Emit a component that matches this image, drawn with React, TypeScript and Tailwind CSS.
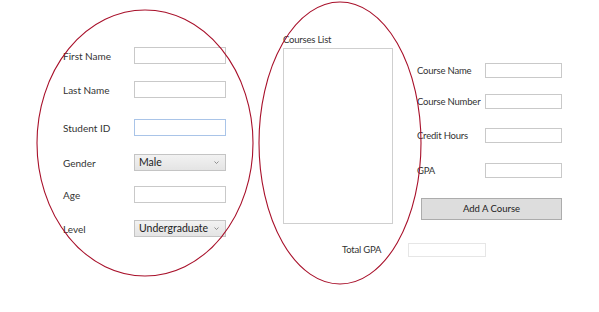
import React from 'react';

const font = { fontFamily: 'Lato, "Open Sans", sans-serif' };

const TextBox = ({ w = 'w-[92px]', h = 'h-[17px]', focused = false, faint = false }: { w?: string; h?: string; focused?: boolean; faint?: boolean }) => (
  <div
    className={`${w} ${h} bg-white border ${
      focused ? 'border-[#a9c4e8]' : faint ? 'border-[#e6e6e6]' : 'border-[#c9c9c9]'
    }`}
  />
);

const ComboBox = ({ value }: { value: string }) => (
  <div className="w-[92px] h-[17px] flex items-center justify-between pl-[4px] pr-[6px] border border-[#c4c4c4] bg-gradient-to-b from-[#f2f2f2] to-[#e4e4e4] text-[10.5px] text-[#222]">
    <span className="leading-none whitespace-nowrap">{value}</span>
    <svg width="5" height="3" viewBox="0 0 5 3" className="shrink-0">
      <path d="M0.5 0.5 L2.5 2.5 L4.5 0.5" fill="none" stroke="#777" strokeWidth="0.8" />
    </svg>
  </div>
);

const Row = ({ label, children, mt, labelW = 'w-[71px]', small = false }: { label: string; children: React.ReactNode; mt: string; labelW?: string; small?: boolean }) => (
  <div className={`flex items-center ${mt}`}>
    <span
      className={`${labelW} shrink-0 whitespace-nowrap text-[#333] leading-none ${
        small ? 'text-[9.5px] tracking-[-0.2px]' : 'text-[10px]'
      }`}
    >
      {label}
    </span>
    {children}
  </div>
);

export default function App() {
  return (
    <div className="relative w-[599px] h-[312px] bg-white overflow-hidden" style={font}>
      <div className="flex">
        {/* student info */}
        <div className="ml-[63px] mt-[47px] w-[163px] flex flex-col">
          <Row label="First Name" mt="mt-0">
            <TextBox />
          </Row>
          <Row label="Last Name" mt="mt-[17px]">
            <TextBox />
          </Row>
          <Row label="Student ID" mt="mt-[21px]">
            <TextBox focused />
          </Row>
          <Row label="Gender" mt="mt-[18px]">
            <ComboBox value="Male" />
          </Row>
          <Row label="Age" mt="mt-[15px]">
            <TextBox />
          </Row>
          <Row label="Level" mt="mt-[17px]">
            <ComboBox value="Undergraduate" />
          </Row>
        </div>

        {/* courses */}
        <div className="ml-[57px] mt-[35px] flex flex-col">
          <div className="flex items-start">
            <div className="flex flex-col w-[110px]">
              <span className="text-[9.5px] tracking-[-0.2px] text-[#333] leading-none h-[13px] whitespace-nowrap">Courses List</span>
              <div className="w-[110px] h-[176px] border border-[#cfcfcf] bg-white" />
            </div>
            <div className="ml-[24px] mt-[28px] w-[145px] flex flex-col">
              <Row label="Course Name" mt="mt-0" labelW="w-[68px]" small>
                <TextBox w="w-[77px]" h="h-[15px]" />
              </Row>
              <Row label="Course Number" mt="mt-[16px]" labelW="w-[68px]" small>
                <TextBox w="w-[77px]" h="h-[15px]" />
              </Row>
              <Row label="Credit Hours" mt="mt-[19px]" labelW="w-[68px]" small>
                <TextBox w="w-[77px]" h="h-[15px]" />
              </Row>
              <Row label="GPA" mt="mt-[20px]" labelW="w-[68px]" small>
                <TextBox w="w-[77px]" h="h-[15px]" />
              </Row>
              <button className="ml-[4px] mt-[20px] w-[141px] h-[22px] bg-[#dddddd] border border-[#acacac] text-[9.5px] text-[#222] leading-none">
                Add A Course
              </button>
            </div>
          </div>
          <div className="flex items-center mt-[19px] ml-[59px]">
            <span className="w-[66px] text-[9.5px] tracking-[-0.2px] text-[#333] leading-none">Total GPA</span>
            <TextBox w="w-[78px]" h="h-[14px]" faint />
          </div>
        </div>
      </div>

      <svg className="absolute inset-0 pointer-events-none" width="599" height="312" viewBox="0 0 599 312">
        <ellipse cx="145" cy="143" rx="108" ry="133" fill="none" stroke="#a8102a" strokeWidth="1.1" />
        <ellipse cx="340" cy="143" rx="81" ry="141" fill="none" stroke="#a8102a" strokeWidth="1.1" />
      </svg>
    </div>
  );
}
